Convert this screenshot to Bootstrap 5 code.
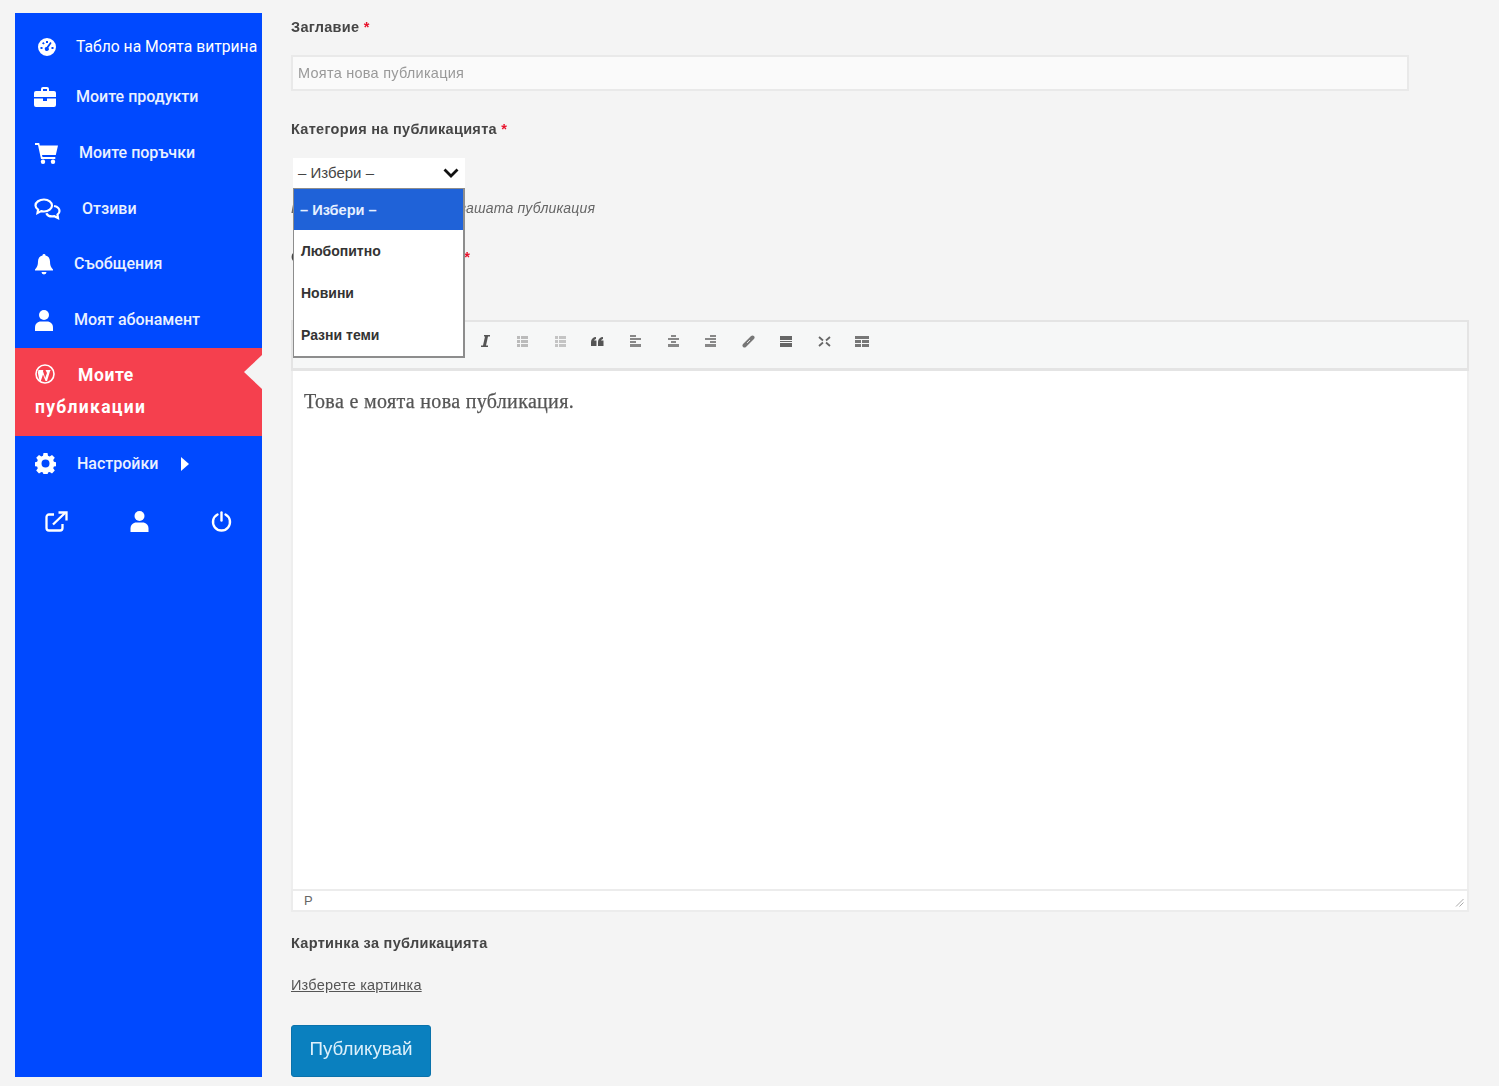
<!DOCTYPE html>
<html lang="bg">
<head>
<meta charset="utf-8">
<title>Моите публикации</title>
<link href="https://cdn.jsdelivr.net/npm/bootstrap@5.3.0/dist/css/bootstrap.min.css" rel="stylesheet">
<style>
html,body{height:100%}
body{background:#f4f4f4;font-family:"Liberation Sans",Arial,sans-serif;color:#444;overflow:hidden}
.shell{padding:13px 0 0 15px;height:1086px;gap:29px;filter:blur(.6px)}
.side{width:247px;height:1064px;flex:none;background:#0049ff;color:#fff;font-family:Roboto,sans-serif;font-size:16px}
.side svg{fill:#fff;flex:none;display:block}
.side-item{height:56px;color:#eaf1ff;font-weight:500}
.side-first{height:50px;margin-top:9px;color:#fff;font-size:15.7px;white-space:nowrap}
.side-first svg{margin-left:23px;margin-right:20px}
.ic1{margin-left:19px;margin-right:20px}
.side-active{height:88px;background:#f5404e;padding:11px 0 0 20px;line-height:32px;font-weight:700;font-size:17.5px;letter-spacing:.6px;color:#fff;position:relative}
.side-active svg{display:inline-block;vertical-align:-3px;margin-right:23px}
.side-active::after{content:"";position:absolute;right:0;top:7px;border:17px solid transparent;border-left:0;border-right:18px solid #f4f4f4}
.wide-line{letter-spacing:1.3px}
.side-set{height:55px}
.side-bottom{padding:20px 30px 0 30px}
.body-col{width:1178px;flex:none}
.lbl{font-size:14.5px;font-weight:700;color:#454545;line-height:20px;margin:0;letter-spacing:.3px;white-space:nowrap}
.lbl i{color:#e8132c;font-style:normal}
.txt{width:1118px;height:36px;margin-top:18px;background:#fafafa;border:2px solid #e9e9e9;color:#999;font-size:14.5px;padding:0 5px;line-height:32px;letter-spacing:.25px}
.cat-lbl{margin-top:28px}
.pick-wrap{position:relative;margin:19px 0 0 2px;width:172px}
.pick{height:30px;background:#fff;color:#444;font-size:15px;padding:0 6px 0 5px}
.pick-list{position:absolute;left:0;top:30px;width:172px;height:170px;background:#fff;border:1px solid #8d8d8d;border-bottom-width:2px;border-right-width:2px;font-size:14px;color:#333;z-index:2;font-weight:700}
.pick-list div{height:42px;line-height:42px;padding-left:7px}
.pick-list .on{background:#1f62d8;color:#e6f0ff;height:41px;padding-left:6px;font-size:14.6px}
.hint{font-size:14px;color:#666;margin:11px 0 0;line-height:18px;white-space:nowrap;font-style:italic;letter-spacing:.17px}
.cont-lbl{margin-top:30px;letter-spacing:.15px}
.ed{margin-top:53px;width:1178px}
.bar{height:51px;background:#f6f7f7;border:2px solid #e4e4e4;border-bottom-width:3px;padding:0 0 8px 173px}
.bar span{width:37.7px;display:flex;justify-content:center;flex:none}
.bar svg{display:block}
.pad{height:518px;background:#fff;border-left:2px solid #eee;border-right:2px solid #eee;padding:18px 11px;font-family:"Liberation Serif",serif;font-size:20px;line-height:24px;color:#555;letter-spacing:.33px;-webkit-text-stroke:.25px #555}
.stat{height:23px;background:#fff;border:2px solid #ececec;font-size:13px;color:#666;padding-left:11px;line-height:19px;position:relative}
.grip{position:absolute;right:3px;bottom:3px}
.pic-lbl{margin-top:21px}
.pic-link{display:block;font-size:14.5px;color:#555;margin-top:22px;line-height:20px;letter-spacing:.2px}
.pub{display:block;margin-top:30px;width:140px;height:52px;background:#0a80bf;border:1px solid #0a72ab;color:#dcf0fb;font-size:18.8px;line-height:46px;border-radius:3px;padding:0 0 4px}
</style>
</head>
<body>
<div class="shell d-flex align-items-start">
  <nav class="side">
    <div class="side-first d-flex align-items-center">
      <svg width="18" height="18" viewBox="0 0 18 18"><path fill-rule="evenodd" d="M9 0a9 9 0 1 0 0 18A9 9 0 0 0 9 0ZM8 3h2v2H8V3ZM4 5.200l1.400-1.200 1.300 1.400-1.400 1.200L4 5.200ZM2.500 9h2v2h-2V9Zm11 0h2v2h-2V9Zm-1.200-5L13.600 5 10.400 9.800a2 2 0 1 1-1.800-.8L12.300 4Z"/></svg>
      Табло на Моята витрина
    </div>
    <div class="side-item d-flex align-items-center" style="height:50px">
      <svg class="ic1" width="22" height="20" viewBox="0 0 22 20"><path fill-rule="evenodd" d="M7 4V2a2 2 0 0 1 2-2h4a2 2 0 0 1 2 2v2h5a2 2 0 0 1 2 2v4H0V6a2 2 0 0 1 2-2h5Zm2-2v2h4V2H9ZM0 11.500h9V14h4v-2.500h9V18a2 2 0 0 1-2 2H2a2 2 0 0 1-2-2v-6.500Z"/></svg>
      <span>Моите продукти</span>
    </div>
    <div class="side-item d-flex align-items-center" style="margin-top:3px">
      <svg style="margin-left:20px;margin-right:21px" width="23" height="21" viewBox="0 0 23 21"><path d="M0 0h4.200l.6 2.500H23l-2.200 9.500H7l.5 2h12.800v2H6L3 2H0V0Z"/><circle cx="8" cy="18.800" r="2.200"/><circle cx="18" cy="18.800" r="2.200"/></svg>
      <span>Моите поръчки</span>
    </div>
    <div class="side-item d-flex align-items-center" style="height:55px">
      <svg style="margin-left:19px;margin-right:21px" width="27" height="22" viewBox="0 0 27 22"><g fill="none" stroke="#fff" stroke-width="2.200"><path d="M10 1.500c4.600 0 8 2.700 8 6s-3.400 6-8 6c-1 0-2-.1-2.800-.4L3.500 15l.6-3.300C2.500 10.600 1.500 9.100 1.500 7.500c0-3.300 3.900-6 8.500-6Z"/><path d="M20 8c3 .6 5.500 2.600 5.500 5 0 1.500-.8 2.700-2 3.600l.5 3.400-3.700-1.800c-3.500.7-6.800-.6-8-3"/></g></svg>
      <span>Отзиви</span>
    </div>
    <div class="side-item d-flex align-items-center">
      <svg style="margin-left:20px;margin-right:21px" width="18" height="21" viewBox="0 0 18 21"><path d="M9 0a1.500 1.500 0 0 1 1.500 1.600c2.900.6 4.500 3 4.500 6 0 4 .8 5.600 3 7.900v1H0v-1c2.200-2.300 3-3.900 3-7.900 0-3 1.600-5.400 4.500-6A1.500 1.500 0 0 1 9 0ZM6.500 18h5a2.500 2.500 0 0 1-5 0Z"/></svg>
      <span>Съобщения</span>
    </div>
    <div class="side-item d-flex align-items-center">
      <svg style="margin-left:20px;margin-right:21px" width="18" height="21" viewBox="0 0 18 21"><circle cx="9" cy="5" r="5"/><path d="M0 21v-3.500C0 14 2.500 11.500 6 11.500h6c3.500 0 6 2.500 6 6V21H0Z"/></svg>
      <span>Моят абонамент</span>
    </div>
    <div class="side-active">
      <svg width="20" height="20" viewBox="0 0 20 20"><circle cx="10" cy="10" r="9" fill="none" stroke="#fff" stroke-width="1.600"/><path d="M3.500 6h5l-.6 1 2.300 7 1.800-5L10.500 6h5.200l-.7 1.200L12 17h-1.500L8 10.500 5.800 17H4.500L2.800 8.500Z"/></svg>Моите<br><span class="wide-line">публикации</span>
    </div>
    <div class="side-item side-set d-flex align-items-center">
      <svg style="margin-left:20px;margin-right:21px" width="21" height="21" viewBox="0 0 21 21"><path fill-rule="evenodd" d="M8.500 0h4l.5 2.800 1.700.7L17 1.900l2.800 2.900-1.600 2.300.7 1.700 2.100.4v4l-2.100.4-.7 1.700 1.600 2.300-2.800 2.900-2.300-1.600-1.700.7-.5 2.300h-4l-.5-2.300-1.700-.7L4 20.500l-2.800-2.900 1.600-2.300-.7-1.700-2.100-.4v-4l2.100-.4.700-1.700L1.200 4.800 4 1.900l2.300 1.600L8 2.800 8.500 0Zm2 6.500a4 4 0 1 0 0 8 4 4 0 0 0 0-8Z"/></svg>
      <span>Настройки</span>
      <svg style="margin-left:22px" width="10" height="14" viewBox="0 0 10 14"><path d="M1 0l8 7-8 7Z"/></svg>
    </div>
    <div class="side-bottom d-flex justify-content-between align-items-center">
      <svg width="23" height="21" viewBox="0 0 23 21"><g fill="none" stroke="#fff" stroke-width="2.300"><path d="M9 3.500H4A2.500 2.500 0 0 0 1.500 6v11A2.500 2.500 0 0 0 4 19.500h11a2.500 2.500 0 0 0 2.500-2.500v-4"/><path d="M8 13.500 20 2"/><path d="M13.500 1.500h8v8"/></g></svg>
      <svg width="19" height="21" viewBox="0 0 18 21"><circle cx="9" cy="5" r="5"/><path d="M0 21v-3.500C0 14 2.500 11.500 6 11.500h6c3.500 0 6 2.500 6 6V21H0Z"/></svg>
      <svg width="21" height="21" viewBox="0 0 21 21"><g fill="none" stroke="#fff" stroke-width="2.400" stroke-linecap="round"><path d="M6.500 3.500a8.500 8.500 0 1 0 8 0"/><path d="M10.500 1.500v8"/></g></svg>
    </div>
  </nav>

  <main class="body-col">
    <p class="lbl" style="margin-top:4px">Заглавие <i>*</i></p>
    <div class="txt">Моята нова публикация</div>
    <p class="lbl cat-lbl">Категория на публикацията <i>*</i></p>
    <div class="pick-wrap">
      <div class="pick d-flex align-items-center justify-content-between">
        <span>– Избери –</span>
        <svg width="16" height="10" viewBox="0 0 16 10"><path d="M1.500 1.500 8 8l6.500-6.500" fill="none" stroke="#111" stroke-width="2.800"/></svg>
      </div>
      <div class="pick-list">
        <div class="on">– Избери –</div>
        <div>Любопитно</div>
        <div>Новини</div>
        <div>Разни теми</div>
      </div>
    </div>
    <p class="hint">Изберете категория за вашата публикация</p>
    <p class="lbl cont-lbl">Съдържание на статия <i>*</i></p>
    <div class="ed">
      <div class="bar d-flex align-items-center">
        <span><svg width="10" height="12" viewBox="0 0 10 12"><path d="M4 0h6v1.500H8L6 10.500h2V12H1v-1.500h2L5 1.500H4Z" fill="#555"/></svg></span>
        <span><svg width="11" height="11" viewBox="0 0 11 11" fill="#bbb"><path d="M0 0h3v3H0zM0 4h3v3H0zM0 8h3v3H0zM4 0h7v3H4zM4 4h7v3H4zM4 8h7v3H4z"/></svg></span>
        <span><svg width="11" height="11" viewBox="0 0 11 11" fill="#c4c4c4"><path d="M0 0h3v3H0zM0 4h3v3H0zM0 8h3v3H0zM4 0h7v3H4zM4 4h7v3H4zM4 8h7v3H4z"/></svg></span>
        <span><svg width="13" height="9" viewBox="0 0 13 9" fill="#555"><path d="M0 5a5 5 0 0 1 5-5v2a3 3 0 0 0-2 1.500h2.500V9H0ZM7 5a5 5 0 0 1 5-5v2a3 3 0 0 0-2 1.500h2.500V9H7Z"/></svg></span>
        <span><svg width="11" height="12" viewBox="0 0 11 12" fill="#888"><path d="M0 0h6v2H0zM0 3h11v2H0zM0 6h6v2H0zM0 9h11v3H0z"/></svg></span>
        <span><svg width="11" height="12" viewBox="0 0 11 12" fill="#888"><path d="M3 0h5v2H3zM0 3h11v2H0zM3 6h5v2H3zM0 9h11v3H0z"/></svg></span>
        <span><svg width="11" height="12" viewBox="0 0 11 12" fill="#888"><path d="M5 0h6v2H5zM0 3h11v2H0zM5 6h6v2H5zM0 9h11v3H0z"/></svg></span>
        <span><svg width="13" height="13" viewBox="0 0 13 13"><path d="M2.500 10.500l8-8" fill="none" stroke="#777" stroke-width="4" stroke-linecap="round"/><path d="M5 8l3-3" stroke="#ddd" stroke-width="1"/></svg></span>
        <span><svg width="12" height="11" viewBox="0 0 12 11" fill="#666"><path d="M0 0h12v4H0zM0 5h12v1H0zM0 7h12v4H0z"/></svg></span>
        <span><svg width="13" height="11" viewBox="0 0 13 11"><path d="M1 1l4 3.500M12 1 8 4.500M1 10l4-3.500M12 10 8 6.500" stroke="#666" stroke-width="1.800" fill="none"/></svg></span>
        <span><svg width="14" height="11" viewBox="0 0 14 11" fill="#777"><path d="M0 0h14v3H0zM0 4h6v3H0zM7 4h7v3H7zM0 8h6v3H0zM7 8h7v3H7z"/></svg></span>
      </div>
      <div class="pad">Това е моята нова публикация.</div>
      <div class="stat">P
        <svg class="grip" width="9" height="9" viewBox="0 0 9 9"><path d="M8.500 1 1 8.500M8.500 4.500 4.500 8.500" stroke="#aaa" stroke-width="1"/></svg>
      </div>
    </div>
    <p class="lbl pic-lbl">Картинка за публикацията</p>
    <a class="pic-link" href="#">Изберете картинка</a>
    <button class="pub" type="button">Публикувай</button>
  </main>
</div>
<script src="https://cdn.jsdelivr.net/npm/bootstrap@5.3.0/dist/js/bootstrap.bundle.min.js"></script>
</body>
</html>
